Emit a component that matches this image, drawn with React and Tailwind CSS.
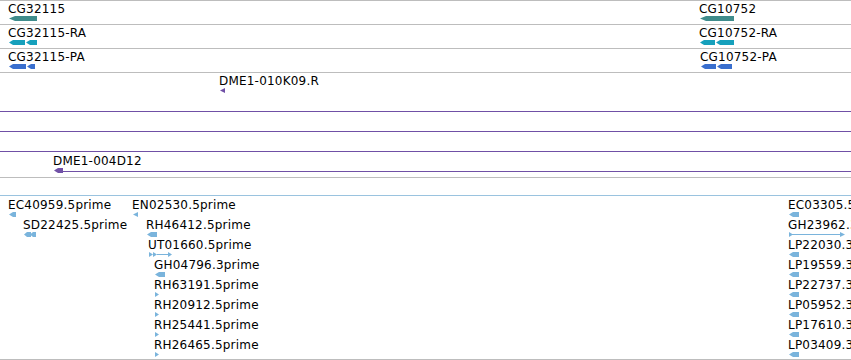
const TEAL = "#3f8c8c";
const CYAN = "#16a0bc";
const BLUE = "#3a6fce";
const PURPLE = "#7050a6";
const EST = "#7ab4dc";

// left-pointing block from a to b
const la = (a, b, h, tip = 4) => `${a},${h / 2} ${a + tip},0 ${b},0 ${b},${h} ${a + tip},${h}`;
const lt = (a, b, h) => `${a},${h / 2} ${b},0 ${b},${h}`;
const rt = (a, b, h) => `${a},0 ${b},${h / 2} ${a},${h}`;

function Glyph({ w, h = 5, color, shapes = [], lines = [] }) {
  return (
    <svg className="block" width={w} height={h} viewBox={`0 0 ${w} ${h}`}>
      {lines.map(([a, b], i) => (
        <line key={"l" + i} x1={a} x2={b} y1={h / 2} y2={h / 2} stroke={color} strokeWidth="1" />
      ))}
      {shapes.map((p, i) => (
        <polygon key={i} points={p} fill={color} />
      ))}
    </svg>
  );
}

// a feature sits at its genomic x inside a track row: label above glyph
function Feature({ f, color, pad = "pt-px" }) {
  return (
    <div className={`absolute top-0 flex flex-col items-start ${pad}`} style={{ left: f.x }}>
      <span className="-ml-px whitespace-nowrap leading-[14px]">{f.label}</span>
      <Glyph w={f.w} color={f.color || color} shapes={f.shapes} lines={f.lines} />
    </div>
  );
}

const geneRows = [
  [
    { label: "CG32115", x: 9, w: 28, color: TEAL, shapes: [la(0, 28, 5, 6)] },
    { label: "CG10752", x: 700, w: 34, color: TEAL, shapes: [la(0, 34, 5, 6)] },
  ],
  [
    { label: "CG32115-RA", x: 9, w: 28, color: CYAN, shapes: [la(0, 16, 5), la(17, 28, 5)] },
    { label: "CG10752-RA", x: 700, w: 34, color: CYAN, shapes: [la(0, 15, 5), la(16, 34, 5)] },
  ],
  [
    { label: "CG32115-PA", x: 9, w: 26, color: BLUE, shapes: [la(0, 17, 5), la(18, 26, 5)] },
    { label: "CG10752-PA", x: 701, w: 31, color: BLUE, shapes: [la(0, 15, 5), la(16, 31, 5)] },
  ],
];

// each row: features plus an optional spanning line (feature wider than the view)
const bacRows = [
  { feats: [{ label: "DME1-010K09.R", x: 220, w: 5, shapes: [lt(0, 5, 5)] }] },
  { span: 0 },
  { span: 0 },
  { span: 0 },
  { feats: [{ label: "DME1-004D12", x: 54, w: 9, shapes: [la(0, 9, 5, 4)] }], span: 62 },
];

const rightBlock = (label) => ({ label, x: 789, w: 10, shapes: [la(0, 10, 5, 4)] });

const estRows = [
  [
    { label: "EC40959.5prime", x: 9, w: 7, shapes: [la(0, 7, 5, 4)] },
    { label: "EN02530.5prime", x: 133, w: 5, shapes: [lt(0, 5, 5)] },
    rightBlock("EC03305.5prime"),
  ],
  [
    { label: "SD22425.5prime", x: 24, w: 12, shapes: [la(0, 7, 5, 3), la(6, 12, 5, 3)] },
    { label: "RH46412.5prime", x: 147, w: 10, shapes: [la(0, 10, 5, 4)] },
    { label: "GH23962.3prime", x: 789, w: 56, shapes: [rt(0, 4, 5), rt(51, 56, 5)], lines: [[3, 52]] },
  ],
  [
    { label: "UT01660.5prime", x: 149, w: 23, shapes: [rt(0, 4, 5), rt(4, 8, 5), rt(19, 23, 5)], lines: [[8, 20]] },
    rightBlock("LP22030.3prime"),
  ],
  [{ label: "GH04796.3prime", x: 155, w: 10, shapes: [la(0, 10, 5, 4)] }, rightBlock("LP19559.3prime")],
  [{ label: "RH63191.5prime", x: 155, w: 4, shapes: [rt(0, 4, 5)] }, rightBlock("LP22737.3prime")],
  [{ label: "RH20912.5prime", x: 155, w: 4, shapes: [rt(0, 4, 5)] }, rightBlock("LP05952.3prime")],
  [{ label: "RH25441.5prime", x: 155, w: 4, shapes: [rt(0, 4, 5)] }, rightBlock("LP17610.3prime")],
  [{ label: "RH26465.5prime", x: 155, w: 4, shapes: [rt(0, 4, 5)] }, rightBlock("LP03409.3prime")],
];

export default function App() {
  return (
    <div className="flex flex-col w-[851px] h-[360px] overflow-hidden bg-white text-[12px] tracking-[0.2px] text-black font-['DejaVu_Sans',sans-serif]">
      {/* gene models */}
      {geneRows.map((row, i) => (
        <div key={i} className="relative h-[24px] shrink-0 border-t border-[#bdbdbd]">
          {row.map((f) => (
            <Feature key={f.label} f={f} />
          ))}
        </div>
      ))}

      {/* BAC ends */}
      <div className="flex flex-col h-[105px] shrink-0 border-t border-[#bdbdbd]">
        {bacRows.map((r, i) => (
          <div key={i} className="relative h-[20px] shrink-0">
            {r.span !== undefined && (
              <div className="absolute right-0 top-[18px] h-px bg-[#7050a6]" style={{ left: r.span }} />
            )}
            {r.feats && r.feats.map((f) => <Feature key={f.label} f={f} color={PURPLE} />)}
          </div>
        ))}
      </div>

      <div className="h-[18px] shrink-0 border-t border-[#bdbdbd]" />

      {/* ESTs */}
      <div className="flex flex-col h-[165px] shrink-0 border-t border-b border-t-[#9ac3df] border-b-[#bdbdbd]">
        {estRows.map((row, i) => (
          <div key={i} className="relative h-[20px] shrink-0">
            {row.map((f) => (
              <Feature key={f.label} f={f} color={EST} pad="pt-[2px]" />
            ))}
          </div>
        ))}
      </div>
    </div>
  );
}
